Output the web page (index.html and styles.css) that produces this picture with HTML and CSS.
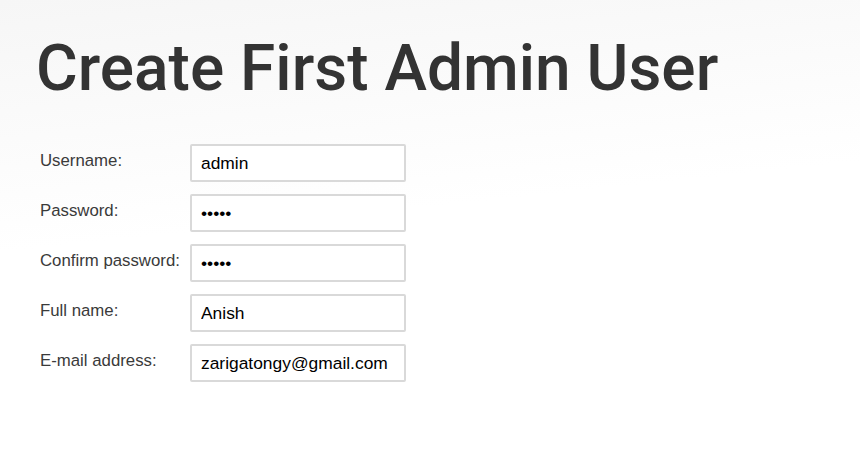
FILE: index.html
```html
<!DOCTYPE html>
<html>
<head>
<meta charset="utf-8">
<title>Create First Admin User</title>
<link rel="stylesheet" href="styles.css">
</head>
<body>
<main class="page">
  <h1 class="title">Create First Admin User</h1>
  <form class="form">
    <label class="label" for="u">Username:</label>
    <input class="field" id="u" type="text" value="admin">
    <label class="label" for="p">Password:</label>
    <input class="field" id="p" type="password" value="admin">
    <label class="label" for="c">Confirm password:</label>
    <input class="field" id="c" type="password" value="admin">
    <label class="label" for="f">Full name:</label>
    <input class="field" id="f" type="text" value="Anish">
    <label class="label" for="e">E-mail address:</label>
    <input class="field" id="e" type="text" value="zarigatongy@gmail.com">
  </form>
</main>
</body>
</html>
```
FILE: styles.css
```css
html, body {
  margin: 0;
  padding: 0;
  height: 100%;
}
body {
  background: linear-gradient(174deg, #f6f6f6 0%, #fbfbfb 25%, #ffffff 45%);
  font-family: "Liberation Sans", Arial, sans-serif;
  color: #333;
}
.page {
  padding: 0 0 0 36px;
}
.title {
  margin: 0;
  padding-top: 31px;
  font-family: Roboto, "Noto Sans", sans-serif;
  font-weight: 500;
  font-size: 64px;
  line-height: 75px;
  color: #333;
  letter-spacing: 0;
}
.form {
  display: grid;
  grid-template-columns: 154px 216px;
  row-gap: 12px;
  margin-top: 38px;
  align-items: start;
}
.label {
  font-size: 16.8px;
  line-height: 18px;
  padding-top: 8px;
  padding-left: 4px;
  color: #3a3a3a;
}
.field {
  box-sizing: border-box;
  width: 216px;
  height: 38px;
  margin: 0;
  border: 2px solid #d9d9d9;
  border-radius: 2px;
  background: #fff;
  padding: 0 9px;
  font-family: "Liberation Sans", Arial, sans-serif;
  font-size: 17.4px;
  color: #000;
  outline: none;
}
```
